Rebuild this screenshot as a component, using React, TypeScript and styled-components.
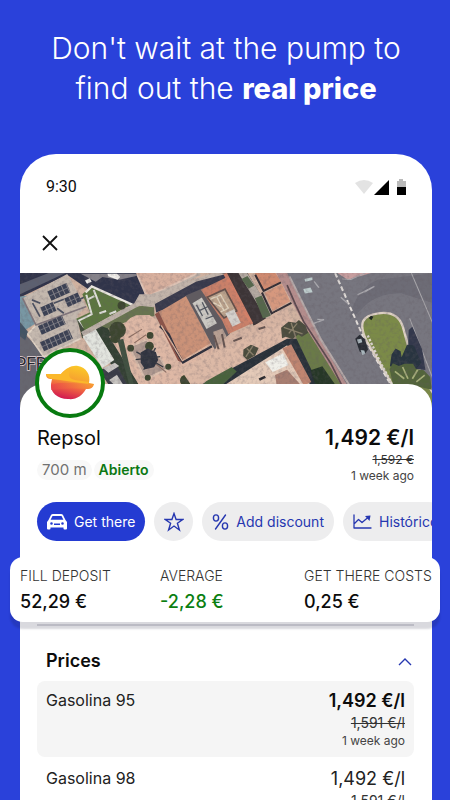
import React from 'react';
import styled, { createGlobalStyle, css } from 'styled-components';

const blue = '#2a41da';

const GlobalStyle = createGlobalStyle`
  *, *::before, *::after { box-sizing: border-box; }
  body {
    margin: 0;
    background: ${blue};
    color: #0c0c0c;
    font-family: Inter, "Liberation Sans", sans-serif;
  }
  button { font: inherit; color: inherit; border: 0; padding: 0; background: none; cursor: pointer; }
  h1, h2, h3, p, dl, dd, dt { margin: 0; font-weight: 400; }
  svg { display: block; }
`;

const Page = styled.main`
  display: flex;
  flex-direction: column;
  height: 100vh;
  overflow: hidden;
  padding: 28px 18px 0 20px;
`;

const Headline = styled.h1`
  flex: none;
  color: #fff;
  font-size: 30px;
  line-height: 40px;
  font-weight: 300;
  text-align: center;
  strong { font-weight: 800; font-size: 29px; line-height: 20px; }
`;

const Phone = styled.div`
  flex: none;
  margin-top: 46px;
  border-radius: 36px 36px 0 0;
  background: #fff;
`;

const StatusBar = styled.div`
  display: flex;
  align-items: center;
  justify-content: space-between;
  height: 64px;
  padding: 0 25px 0 26px;
  font-family: Roboto, sans-serif;
  font-size: 16px;
  font-weight: 400;
`;

const StatusIcons = styled.div`
  display: flex;
  align-items: center;
  padding-top: 3px;
`;

const TopBar = styled.div`
  display: flex;
  align-items: center;
  height: 55px;
  padding: 0 20px 6px;
`;

const CloseButton = styled.button`
  display: grid;
  place-items: center;
  width: 20px;
  height: 20px;
`;

const MapView = styled.div`
  height: 138px;
  overflow: hidden;
  svg { width: 100%; height: 100%; }
`;

const Sheet = styled.section`
  position: relative;
  margin-top: -27px;
  border-radius: 24px 24px 0 0;
  background: #fff;
`;

const Brand = styled.div`
  display: grid;
  place-items: center;
  position: absolute;
  top: -36px;
  left: 15px;
  width: 70px;
  height: 70px;
  border: 4px solid #087a10;
  border-radius: 50%;
  background: #fff;
`;

const StationHeader = styled.header`
  display: flex;
  justify-content: space-between;
  padding: 40px 18px 0 17px;
`;

const StationName = styled.h2`
  font-size: 20px;
  line-height: 28px;
`;

const Tags = styled.div`
  display: flex;
  gap: 2px;
  margin-top: 8px;
`;

const Tag = styled.span<{ $open?: boolean }>`
  padding: 0 5px;
  border-radius: 10px;
  background: #f8f8f8;
  color: ${p => (p.$open ? '#0b7712' : '#717171')};
  font-size: ${p => (p.$open ? 14 : 15)}px;
  line-height: 20px;
  font-weight: ${p => (p.$open ? 600 : 400)};
`;

const PriceBlock = styled.div`
  display: flex;
  flex-direction: column;
  align-items: flex-end;
`;

const Price = styled.strong<{ $size: 'large' | 'medium' | 'plain' }>`
  ${p => p.$size === 'large' && css`font-size: 21px; line-height: 28px; font-weight: 600;`}
  ${p => p.$size === 'medium' && css`font-size: 18px; line-height: 24px; font-weight: 600;`}
  ${p => p.$size === 'plain' && css`font-size: 18px; line-height: 24px; font-weight: 400; color: #222;`}
`;

const OldPrice = styled.s<{ $large?: boolean }>`
  color: #333;
  font-size: ${p => (p.$large ? 14 : 12)}px;
  line-height: ${p => (p.$large ? 20 : 16)}px;
`;

const Age = styled.span`
  color: #444;
  font-size: 12px;
  line-height: 16px;
`;

const Actions = styled.div`
  display: flex;
  gap: 9px;
  overflow: hidden;
  padding: 18px 0 16px 17px;
`;

const Action = styled.button<{ $primary?: boolean; $round?: boolean }>`
  flex: none;
  display: flex;
  align-items: center;
  justify-content: center;
  gap: 7px;
  height: 39px;
  padding: ${p => (p.$round ? '0' : '0 10px')};
  width: ${p => (p.$round ? '39px' : 'auto')};
  border-radius: 20px;
  background: ${p => (p.$primary ? '#243bd2' : '#ededee')};
  color: ${p => (p.$primary ? '#fff' : '#2637b0')};
  font-size: 14px;
  white-space: nowrap;
`;

const Stats = styled.dl`
  position: relative;
  display: grid;
  grid-template-columns: 140px 144px auto;
  margin: 0 -8px 0 -10px;
  padding: 8px 0 5px 10px;
  border-radius: 13px;
  background: #fff;
  box-shadow: 0 7px 2px 0 rgba(20, 20, 50, 0.16);
`;

const StatLabel = styled.dt`
  color: #333;
  font-size: 14px;
  line-height: 22px;
  font-weight: 300;
  white-space: nowrap;
`;

const StatValue = styled.dd<{ $good?: boolean }>`
  color: ${p => (p.$good ? '#0b7f12' : '#0c0c0c')};
  font-size: 18px;
  line-height: 30px;
  font-weight: 500;
`;

const Prices = styled.section`
  margin: 2px 18px 0 17px;
  border-top: 2px solid #dcdce1;
  padding-top: 23px;
`;

const PricesHeader = styled.div`
  display: flex;
  align-items: center;
  justify-content: space-between;
  padding: 0 1px 0 9px;
`;

const PricesTitle = styled.h3`
  font-size: 18px;
  line-height: 24px;
  font-weight: 600;
`;

const ToggleButton = styled.button`
  padding: 3px 1px;
`;

const FuelRow = styled.div<{ $selected?: boolean }>`
  display: flex;
  justify-content: space-between;
  margin-top: ${p => (p.$selected ? 8 : 0)}px;
  padding: ${p => (p.$selected ? 8 : 10)}px 9px 8px;
  border-radius: 8px;
  background: ${p => (p.$selected ? '#f5f5f5' : '#fff')};
`;

const FuelName = styled.span`
  color: #222;
  font-size: 16px;
  line-height: 22px;
`;

const Panels = ({ x, y, w, h }: { x: number; y: number; w: number; h: number }) => (
  <g transform={`translate(${x} ${y}) rotate(-24)`}>
    <rect width={w} height={h} fill="#3a4053" />
    {Array.from({ length: Math.floor(w / 15) }, (_, i) => (
      <path key={i} d={`M${(i + 1) * 15} 0v${h}`} stroke="#a49e9c" strokeWidth="2" />
    ))}
    <path d={`M0 ${h / 2}h${w}`} stroke="#85858c" strokeWidth="2" />
  </g>
);

const Aerial = () => (
  <svg viewBox="60 40 1236 411" preserveAspectRatio="xMidYMid slice" role="img" aria-label="Satellite map">
    <defs>
      <filter id="grain" x="0" y="0" width="100%" height="100%">
        <feTurbulence type="fractalNoise" baseFrequency="0.09" numOctaves="3" seed="8" />
        <feColorMatrix values="0 0 0 0 0.12  0 0 0 0 0.1  0 0 0 0 0.12  0 0.7 0 0 -0.3" />
      </filter>
    </defs>
    <rect x="60" y="40" width="1236" height="411" fill="#d0b2a0" />
    <path d="M60 40H420L440 95L400 150L270 90L205 45L60 115Z" fill="#30344a" />
    <path d="M60 75L150 40H200L60 105Z" fill="#5c6070" />
    <path d="M245 42H420L408 50L360 60L310 52L290 66Z" fill="#85828a" />
    <path d="M325 42h28l10 10l-8 8l-28-10zM258 62l14-6l6 10l-14 6z" fill="#f0eeea" />
    <path d="M60 200L160 310V451H60Z" fill="#66666f" />
    <path d="M60 110L85 108L112 190L80 210L60 180Z" fill="#7897a3" />
    <path d="M60 180L88 215L80 240L60 225Z" fill="#435464" />
    <path d="M72 115L205 43L262 140L235 165L245 235L135 290L88 222L112 195Z" fill="#c4b8ae" />
    <path d="M112 195L88 222L135 290L245 235" fill="none" stroke="#e0d3c5" strokeWidth="5" />
    <path d="M72 115L112 195L262 140" fill="none" stroke="#81767c" strokeWidth="5" />
    <Panels x={146} y={95} w={62} h={30} />
    <Panels x={125} y={143} w={40} h={28} />
    <Panels x={196} y={116} w={44} h={28} />
    <Panels x={118} y={198} w={78} h={28} />
    <Panels x={124} y={246} w={94} h={30} />
    <path d="M100 120l25 10M102 130l22 40M165 130l30-12M175 145l20 15M240 120l18-9" stroke="#4b5060" strokeWidth="5" />
    <path d="M250 103L277 80L396 133L250 216L232 176L273 157Z" fill="#5c7640" />
    <path d="M260 98L278 80L400 135" fill="none" stroke="#ece9e1" strokeWidth="7" />
    <path d="M262 105L278 163L239 182L251 205M284 90L304 141M268 118l18-9M301 160l20-7M331 162l20-8" fill="none" stroke="#e2e2dc" strokeWidth="6" />
    <path d="M235 178l25 36l-10 22z" fill="#424b3c" />
    <path d="M286 205L318 189L420 375H370L330 303L345 298Z" fill="#334033" />
    <path d="M251 229L289 205L345 299L310 323Z" fill="#e2e4de" />
    <path d="M300 330L350 310L385 375H330Z" fill="#3a3c47" />
    <path d="M312 324l35-17l13 10l-32 20zM330 359l23-16l18 28h-28z" fill="#c8c5c1" />
    <path d="M300 196L396 140L463 137L465 168L378 187L332 207Z" fill="#68744f" />
    <path d="M250 222L400 140L600 40" fill="none" stroke="#bdb1a8" strokeWidth="14" />
    <path d="M410 40H590L442 118L430 78Z" fill="#d8b09e" />
    <path d="M414 45L443 112L590 42" fill="none" stroke="#dfc3b4" strokeWidth="6" />
    <path d="M402 135L420 103L454 103L638 40H680L462 142Z" fill="#c2b4aa" />
    <path d="M466 132L590 65L690 40L700 70L470 158Z" fill="#393a4c" />
    <path d="M373 205Q378 178 410 166L450 165L467 177L552 306L640 262L660 330L600 375H420L330 230Z" fill="#deb8a5" />
    <path d="M355 240L372 236L404 375H390Z" fill="#405040" />
    <path d="M390 260L442 238L504 326L437 356Z" fill="#b09a90" stroke="#dcc0ae" strokeWidth="6" />
    <path d="M388 232l40-25M405 248l35-24M440 286l60 50" stroke="#8d6d60" strokeWidth="3" />
    {[[355, 210, 25], [394, 264, 10], [452, 226, 10], [450, 258, 13], [506, 319, 9], [445, 352, 9], [348, 234, 15], [367, 137, 12], [558, 360, 17]].map(([x, y, r]) => (
      <circle key={`${x}-${y}`} cx={x} cy={y} r={r} fill="#3d4630" />
    ))}
    <path d="M424 277l20-12l25 10l7 24l-12 22l-27 6l-13-20z" fill="#303440" />
    <path d="M411 275l80 45M468 263l-35 65M482 289l-73 9" stroke="#343841" strokeWidth="4" />
    <path d="M466 163L484 151L550 308L535 301Z" fill="#8b5449" />
    <path d="M478 156L560 108L633 249L548 302Z" fill="#cb9278" />
    <path d="M481 198L507 222L530 272L550 306L636 258" fill="none" stroke="#2d2e3b" strokeWidth="7" />
    <path d="M485 196L548 301L633 251" fill="none" stroke="#e1b59c" strokeWidth="4" />
    <path d="M558 107L618 82L690 222L650 275L633 249Z" fill="#605b60" />
    <path d="M640 215L668 205L690 250L650 270Z" fill="#b79f92" />
    <path d="M578 130L606 113L651 190L620 207Z" fill="#cbc8c2" />
    <path d="M590 135l18 33M607 127l18 37M600 151l26-12M617 177l25-10" stroke="#555962" strokeWidth="4" />
    <path d="M603 90L700 43L753 191L685 222L667 182Z" fill="#c98069" />
    <path d="M622 112L675 88L710 153L672 174Z" fill="#bca38c" stroke="#65504a" strokeWidth="5" />
    <path d="M632 118L662 105L685 145L662 156M640 128l29 15M650 110l22 42" fill="none" stroke="#e1d3bd" strokeWidth="4" />
    <path d="M676 160l26-12l20 40l-25 12z" fill="#d5d1cc" />
    <path d="M662 40L742 40L825 178L760 196L681 43Z" fill="#3d3537" />
    <path d="M670 43L681 40L759 190L750 194Z" fill="#d38169" />
    <path d="M715 40L741 40L825 173L804 186Z" fill="#b4aaa1" />
    <path d="M724 58l18-9l20 28l-17 10zM764 115l20-8l28 60l-24 8z" fill="#55674b" />
    <path d="M764 40H825L843 66L790 94Z" fill="#cf8a70" />
    <path d="M793 99L844 72L869 124L817 153Z" fill="#d6987e" />
    <path d="M785 98L814 160L873 129M765 45L790 93L842 68" fill="none" stroke="#332e35" strokeWidth="6" />
    <path d="M630 283L870 178L860 145L825 158L760 198L687 223Z" fill="#d6b4a2" />
    <path d="M540 324L870 174L910 250L640 375H575Z" fill="#dcb9a6" />
    <path d="M642 225l14 42M666 222l8 40M700 243l25-10M775 207l20-6" stroke="#655450" strokeWidth="6" />
    <path d="M600 375L860 236L890 235L1040 375Z" fill="#293139" />
    <path d="M620 362l75-42l15 13l-45 43h-60z" fill="#48623c" />
    <path d="M672 375L860 255L930 375Z" fill="#e4cab8" />
    <path d="M846 265L872 252L932 365L910 375Z" fill="#c08570" />
    <path d="M795 306L848 279L864 314L817 335Z" fill="#f0efe9" />
    <path d="M824 344L860 328L902 375H829Z" fill="#a87e71" />
    <path d="M775 354l18-8l4 6l-18 9z" fill="#27282c" />
    <path d="M878 215L923 214L1028 375H955Z" fill="#6a7a48" />
    <path d="M930 330l35-12l40 57h-60z" fill="#263727" />
    <path d="M827 40H864L1048 375H1022L920 210Z" fill="#b48d8c" />
    <path d="M860 76L885 134L909 184L990 309L1023 375" fill="none" stroke="#5b484d" strokeWidth="5" />
    <path d="M860 40H1296V451H1150L1040 375L960 240Z" fill="#77767f" />
    <path d="M1046 180Q1060 90 1130 60L1296 40V130L1200 100Q1120 100 1080 150Z" fill="#6d6c76" />
    <path d="M867 50L960 237L1046 375" fill="none" stroke="#b6aaa9" strokeWidth="6" />
    <path d="M1010 40L1040 60L1110 40Z" fill="#c79e9f" />
    <path d="M1003 40L1085 226L1170 375" fill="none" stroke="#e4dfdb" strokeWidth="6" strokeDasharray="14 8" />
    <path d="M1024 58L1050 59L1092 40M1230 40L1296 195M1225 175L1296 360" fill="none" stroke="#a9a7ab" strokeWidth="3" />
    <path d="M1070 105L1120 80L1090 97M940 65L955 84M1020 112l20 18M940 190L970 179L950 178" fill="none" stroke="#aaa9ae" strokeWidth="4" />
    <path d="M1175 375L1098 244C1070 190 1084 166 1132 160C1175 154 1195 173 1204 198L1228 284L1296 400V451H1220Z" fill="#7b8a48" stroke="#ddd0c4" strokeWidth="7" />
    <path d="M1100 226L1137 305L1175 375" fill="none" stroke="#ddd6d0" strokeWidth="7" strokeDasharray="7 5" />
    <path d="M1222 210L1233 200L1262 266L1272 329L1239 325L1220 282Z" fill="#33384c" />
    <path d="M1166 318l5-35l12-18l15 8l3 18l16-37l20 1l23 53l-31 33z" fill="#283440" />
    <path d="M1165 326l10-17l18 8l16-7l26 0l9 16l23 4l19 20l5 38l-57-14h-58z" fill="#52643b" />
    <path d="M1181 333l28 22M1204 320l16 35M1249 328l-16 27M1270 344l-25 20" stroke="#a9b17b" strokeWidth="5" />
    <path d="M1063 236L1076 224L1092 237L1101 268L1091 282L1076 274Z" fill="#292c34" />
    <path d="M1079 269l11 2l3 10l-9 3zM1068 238l13-2l3 10l-12 4z" fill="#a9b6bc" />
    <path d="M908 88l22-5l6 14l-23 4zM912 58l23-5l1 8l-22 5z" fill="#bdcccc" />
    <path d="M1103 174l7-7l7 3l-6 11z" fill="#1c2420" />
    <path d="M842 203l22-18l22 3l9-8l20 16l8 22l-19 12l-11-7l-17 14l-20-7l-11 4zM730 268l22-14l23 9l-10 23l-24 13l-12-12z" fill="#4b4c3d" />
    <path d="M850 202l56 19M872 188l14 45M890 190l-25 30M740 265l20 20M758 257l-21 33" stroke="#8b816a" strokeWidth="4" />
    <rect x="60" y="40" width="1236" height="411" filter="url(#grain)" />
    <text x="50" y="329" fill="#282630" stroke="#e7d5d5" strokeWidth="4" paintOrder="stroke" fontFamily="Roboto, sans-serif" fontSize="52">PFRE</text>
  </svg>
);

const BrandMark = () => (
  <svg width="50" height="38" viewBox="0 0 50 38" aria-label="Repsol" role="img">
    <defs>
      <linearGradient id="sun" x1="0.7" y1="0" x2="0.35" y2="1">
        <stop offset="0" stopColor="#fbc927" />
        <stop offset="0.43" stopColor="#f6a031" />
        <stop offset="0.65" stopColor="#ef6142" />
        <stop offset="1" stopColor="#cf1552" />
      </linearGradient>
      <linearGradient id="flare">
        <stop offset="0" stopColor="#e8434b" />
        <stop offset="1" stopColor="#f99934" />
      </linearGradient>
    </defs>
    <path d="M1 10L16 10C21 4 27 1 33 2C41 3 46 11 44 19L49 20C48 24 46 25 41 25C37 32 31 36 23 35C12 35 5 28 6 20L7 15C3 15 1 14 1 10Z" fill="url(#sun)" />
    <path d="M1 10L16 10Q22 4 27 3Q20 14 30 16L44 18L43 20Q22 17 7 15Q2 14 1 10Z" fill="#fbb82b" />
    <path d="M6 21Q14 18 24 19L49 20Q47 25 41 25Q24 23 6 26Z" fill="url(#flare)" opacity="0.65" />
  </svg>
);

const stroke = { fill: 'none', stroke: 'currentColor', strokeLinecap: 'round', strokeLinejoin: 'round' } as const;

const CarIcon = () => (
  <svg width="20" height="18" viewBox="0 0 20 18" aria-hidden="true">
    <path fill="currentColor" fillRule="evenodd" d="M4 2Q4.500 1 6 1H14Q15.500 1 16 2L18.500 7L20 9V15.500Q20 16.500 19 16.500H17.500Q16.500 16.500 16.500 15.500V14.500H3.500V15.500Q3.500 16.500 2.500 16.500H1Q0 16.500 0 15.500V9L1.500 7ZM5.500 3L3.600 6.800H16.400L14.500 3ZM4.500 9.200A1.300 1.300 0 1 0 4.500 11.800A1.300 1.300 0 1 0 4.500 9.200ZM15.500 9.200A1.300 1.300 0 1 0 15.500 11.800A1.300 1.300 0 1 0 15.500 9.200ZM7 10.500V12H13V10.500Z" />
  </svg>
);

const StarIcon = () => (
  <svg width="20" height="20" viewBox="0 0 20 20" aria-hidden="true">
    <path {...stroke} strokeLinejoin="miter" strokeWidth="1.400" d="M10 1.500L12.100 7.500H18.700L13.400 11.300L15.400 18L10 14L4.600 18L6.600 11.300L1.300 7.500H7.900Z" />
  </svg>
);

const PercentIcon = () => (
  <svg width="17" height="16" viewBox="0 0 17 16" aria-hidden="true">
    <g {...stroke} strokeWidth="1.400">
      <ellipse cx="4" cy="4" rx="2.600" ry="3.100" />
      <ellipse cx="13" cy="12" rx="2.600" ry="3.100" />
      <path d="M13.500 1L3.500 15" />
    </g>
  </svg>
);

const ChartIcon = () => (
  <svg width="19" height="15" viewBox="0 0 19 15" aria-hidden="true">
    <path {...stroke} strokeWidth="1.300" d="M1 1V14H18M1 10L5.500 5.500L9 8.500L15 3.500" />
    <path fill="currentColor" d="M12 2L17.500 1.500L16.500 7Z" />
  </svg>
);

export default function App() {
  return (
    <>
      <GlobalStyle />
      <Page>
        <Headline>
          Don't wait at the pump to<br />find out the <strong>real price</strong>
        </Headline>
        <Phone>
          <StatusBar>
            <time>9:30</time>
            <StatusIcons>
              <svg width="52" height="18" viewBox="0 0 52 18" aria-label="Wi-Fi, signal, battery" role="img">
                <path d="M0 4Q9 -2 18 4L9 15Z" fill="#e3e3e3" />
                <path d="M19 16L34 1V16Z" fill="#000" />
                <path d="M44 0h4v2h3v6H42V2h2z" fill="#bababa" />
                <path d="M42 8h9v8H42z" fill="#000" />
              </svg>
            </StatusIcons>
          </StatusBar>
          <TopBar>
            <CloseButton aria-label="Close">
              <svg width="16" height="16" viewBox="0 0 16 16" aria-hidden="true">
                <path d="M1 1L15 15M15 1L1 15" stroke="#111" strokeWidth="1.800" />
              </svg>
            </CloseButton>
          </TopBar>
          <MapView><Aerial /></MapView>
          <Sheet>
            <Brand><BrandMark /></Brand>
            <StationHeader>
              <div>
                <StationName>Repsol</StationName>
                <Tags>
                  <Tag>700 m</Tag>
                  <Tag $open>Abierto</Tag>
                </Tags>
              </div>
              <PriceBlock>
                <Price $size="large">1,492 €/l</Price>
                <OldPrice>1,592 €</OldPrice>
                <Age>1 week ago</Age>
              </PriceBlock>
            </StationHeader>
            <Actions>
              <Action $primary><CarIcon />Get there</Action>
              <Action $round aria-label="Add to favourites"><StarIcon /></Action>
              <Action><PercentIcon />Add discount</Action>
              <Action><ChartIcon />Histórico</Action>
            </Actions>
            <Stats>
              <div><StatLabel>FILL DEPOSIT</StatLabel><StatValue>52,29 €</StatValue></div>
              <div><StatLabel>AVERAGE</StatLabel><StatValue $good>-2,28 €</StatValue></div>
              <div><StatLabel>GET THERE COSTS</StatLabel><StatValue>0,25 €</StatValue></div>
            </Stats>
            <Prices>
              <PricesHeader>
                <PricesTitle>Prices</PricesTitle>
                <ToggleButton aria-label="Collapse prices" aria-expanded="true">
                  <svg width="14" height="9" viewBox="0 0 14 9" aria-hidden="true">
                    <path d="M1 8L7 2L13 8" fill="none" stroke="#2637b0" strokeWidth="1.400" />
                  </svg>
                </ToggleButton>
              </PricesHeader>
              <FuelRow $selected>
                <FuelName>Gasolina 95</FuelName>
                <PriceBlock>
                  <Price $size="medium">1,492 €/l</Price>
                  <OldPrice $large>1,591 €/l</OldPrice>
                  <Age>1 week ago</Age>
                </PriceBlock>
              </FuelRow>
              <FuelRow>
                <FuelName>Gasolina 98</FuelName>
                <PriceBlock>
                  <Price $size="plain">1,492 €/l</Price>
                  <OldPrice $large>1,591 €/l</OldPrice>
                  <Age>1 week ago</Age>
                </PriceBlock>
              </FuelRow>
            </Prices>
          </Sheet>
        </Phone>
      </Page>
    </>
  );
}
